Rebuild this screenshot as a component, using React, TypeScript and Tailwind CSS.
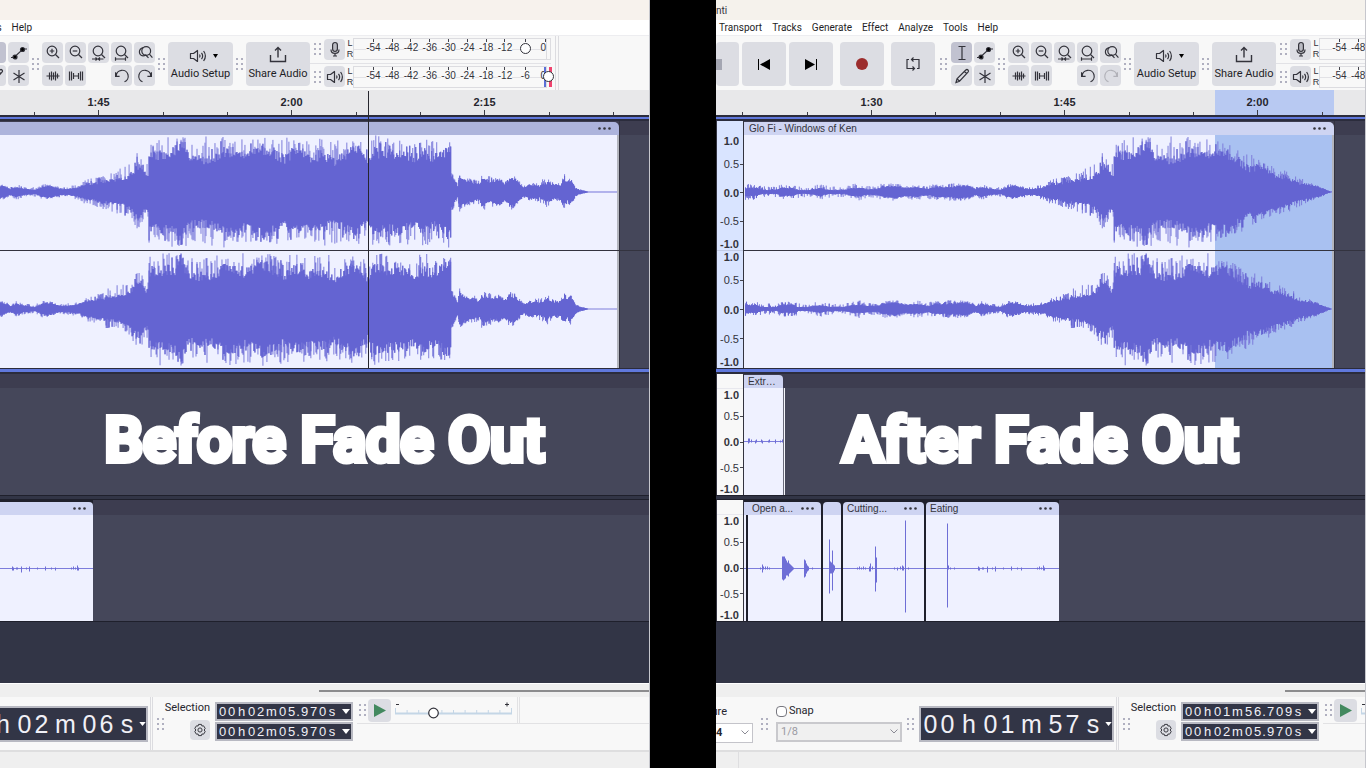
import React from 'react';

type Variant = 'before' | 'after';
type Key = [number, number, number];

/* Envelope of the music clip: [pixel offset, body level, peak level]. */
const ENVELOPE: Key[] = [
  [28, 4, 9], [40, 4, 8], [46, 2, 6], [60, 2, 5], [65, 4, 8], [76, 4, 7], [82, 2, 6], [92, 2, 5], [104, 4, 8], [112, 2, 6],
  [128, 2, 5], [136, 4, 8], [143, 4, 9], [150, 3, 6], [162, 3, 6], [166, 5, 9], [180, 6, 9], [190, 4, 6], [200, 5, 9],
  [212, 3, 7], [220, 5, 8], [235, 5, 9], [245, 6, 9], [252, 6, 8], [260, 3, 5], [266, 5, 8], [275, 3, 5], [285, 2, 5],
  [292, 5, 8], [298, 6, 8], [306, 4, 6], [312, 3, 5], [318, 3, 6], [325, 4, 8], [330, 5, 8],
  [333, 7, 12], [337, 8, 13], [344, 8, 14],
  [350, 10, 16], [360, 11, 22], [370, 13, 24], [377, 14, 27], [383, 20, 32], [387, 25, 42], [391, 25, 38],
  [395, 18, 30], [398, 18, 34], [399, 34, 54], [405, 35, 46], [410, 37, 56], [420, 38, 55], [425, 38, 56], [428, 48, 56],
  [432, 46, 56], [436, 38, 54], [440, 32, 50], [450, 32, 50], [457, 32, 57], [465, 34, 52], [475, 40, 57],
  [485, 40, 54], [495, 35, 56], [505, 38, 52], [512, 42, 57], [525, 38, 53], [535, 32, 55], [542, 38, 54],
  [550, 38, 54], [565, 32, 52], [570, 37, 55], [585, 30, 53], [595, 37, 50], [608, 42, 57], [618, 28, 46],
  [625, 40, 57], [635, 37, 54], [650, 38, 53], [665, 33, 52], [675, 37, 55], [685, 34, 50], [699, 42, 56],
  [701, 42, 55], [702, 17, 20], [706, 9, 12], [708, 6, 8], [710, 16, 22], [714, 12, 15], [725, 9, 13],
  [730, 8, 12], [732, 13, 19], [742, 10, 15], [750, 12, 14], [755, 8, 10], [761, 14, 19], [768, 10, 13],
  [774, 4, 6], [780, 7, 9], [790, 6, 11], [798, 9, 16], [805, 7, 9], [811, 7, 9], [815, 13, 18], [818, 9, 11],
  [821, 12, 16], [823, 9, 10], [826, 4, 5], [830, 2, 3], [836, 1, 1], [840, 0, 0], [872, 0, 0],
];

const FADE_START = 499;
const FADE_END = 618;

function makeRandom(seed: number) {
  let s = seed;
  return () => {
    s = (s * 1664525 + 1013904223) >>> 0;
    return s / 4294967296;
  };
}

function levelAt(x: number): [number, number] {
  for (let i = 1; i < ENVELOPE.length; i++) {
    const [x1, b1, p1] = ENVELOPE[i];
    if (x <= x1) {
      const [x0, b0, p0] = ENVELOPE[i - 1];
      const k = (x - x0) / (x1 - x0);
      return [b0 + (b1 - b0) * k, p0 + (p1 - p0) * k];
    }
  }
  return [0, 0];
}

function musicPaths(end: number, seed: number, fade: boolean) {
  const rnd = makeRandom(seed);
  let body = '';
  let peaks = '';
  for (let x = 29; x < end; x++) {
    const [b, p] = levelAt(x);
    const side = () => {
      const r = rnd();
      const n = r < 0.12 ? b + (p - b) * rnd() * 0.8 : b * (0.86 + rnd() * 0.3);
      const spike = rnd() < 0.38 ? n + (p - n) * (0.3 + rnd() * 0.7) : n;
      return [n, Math.max(n, spike)];
    };
    const up = side();
    const down = side();
    const g = fade && x > FADE_START ? Math.max(0, (FADE_END - x) / (FADE_END - FADE_START)) : 1;
    const px = x - 28 + 0.5;
    body += `M${px} ${(57 - Math.max(0.3, up[0] * g)).toFixed(1)}V${(57 + Math.max(0.3, down[0] * g)).toFixed(1)}`;
    peaks += `M${px} ${(57 - Math.max(0.3, up[1] * g)).toFixed(1)}V${(57 + Math.max(0.3, down[1] * g)).toFixed(1)}`;
  }
  return { body, peaks };
}

function MusicWave({ end, seed, fade }: { end: number; seed: number; fade: boolean }) {
  const w = end - 28;
  const { body, peaks } = musicPaths(end, seed, fade);
  return (
    <svg className="block h-full w-full" viewBox={`0 0 ${w} 115`} preserveAspectRatio="none" aria-hidden="true">
      <path d={peaks} stroke="#7c7cdb" strokeWidth="1" fill="none" />
      <path d={body} stroke="#6464d2" strokeWidth="1.1" fill="none" />
    </svg>
  );
}

/* Bars of a short effect clip: [x, up, down]. */
function EffectWave({ bars }: { bars: Key[] }) {
  return (
    <svg className="block h-full w-full overflow-hidden" aria-hidden="true">
      <path d="M0 53.5H400" stroke="#7d7ddc" strokeWidth="1" />
      <path d={bars.map(([x, u, d]) => `M${x + 0.5} ${53.5 - u}V${53.5 + d}`).join('')} stroke="#6e6ed6" strokeWidth="1" />
    </svg>
  );
}

const EXTRA: Key[] = [[4, 3, 2], [5, 3, 1], [7, 2, 1], [11, 1, 2], [12, 2, 1], [17, 2, 1], [18, 1, 2], [24, 1, 1], [25, 2, 1], [31, 2, 2], [36, 1, 1], [38, 2, 1]];
const OPENING: Key[] = [
  [12, 1, 1], [14, 4, 4], [15, 2, 1], [17, 2, 1], [19, 2, 1], [21, 1, 1],
  [34, 12, 11], [35, 12, 12], [36, 12, 11], [37, 10, 10], [38, 8, 7], [39, 6, 7], [40, 8, 8], [41, 5, 5], [42, 4, 4], [43, 3, 3], [44, 2, 2], [45, 1, 1],
  [56, 9, 9], [57, 8, 8], [58, 5, 5], [59, 3, 3], [60, 2, 2], [64, 1, 1],
];
const SHORT: Key[] = [[6, 29, 25], [7, 7, 5], [8, 6, 5], [9, 18, 22], [10, 4, 4], [11, 3, 2]];
const CUTTING: Key[] = [[14, 1, 1], [16, 2, 1], [18, 1, 1], [20, 2, 1], [22, 1, 1], [26, 2, 3], [27, 5, 3], [29, 2, 1], [32, 22, 23], [33, 11, 14], [51, 1, 1], [54, 1, 2], [57, 2, 1], [59, 3, 2], [60, 2, 2], [62, 48, 44], [65, 1, 1]];
const EATING: Key[] = [[21, 45, 39], [22, 3, 1], [24, 1, 1], [28, 1, 1], [52, 2, 2], [53, 1, 2], [56, 1, 1], [57, 1, 1], [61, 2, 4], [66, 1, 1], [69, 2, 3], [77, 1, 1], [85, 2, 2], [91, 1, 1], [95, 1, 2], [111, 1, 1], [113, 2, 1], [115, 1, 1], [117, 3, 2], [118, 1, 2]];

function Icon({ children, className = 'size-5' }: { children: React.ReactNode; className?: string }) {
  return (
    <svg viewBox="0 0 20 20" className={className} fill="none" stroke="#33333b" strokeWidth="1.2" aria-hidden="true">
      {children}
    </svg>
  );
}

const Speaker = () => (
  <Icon>
    <path d="M2.5 7.5H5.5L9.5 4.5V15.5L5.5 12.5H2.5Z" strokeLinejoin="round" />
    <path d="M11.5 8.5Q12.6 10 11.5 11.5M13.5 6.8Q15.8 10 13.5 13.2M15.6 5Q19.2 10 15.6 15" />
  </Icon>
);
const Mic = () => (
  <Icon>
    <rect x="7.6" y="3.5" width="4.8" height="9" rx="2.4" fill="#b9bac2" />
    <path d="M6 10.5Q6 14.4 10 14.4Q14 14.4 14 10.5M10 14.4V17M8 17H12" />
  </Icon>
);
const Lens = ({ kind }: { kind: string }) => (
  <Icon>
    {kind === 'toggle' ? (
      <>
        <circle cx="11.2" cy="8" r="4.4" />
        <path d="M14.4 11.2L17.4 14.6M8.2 4.6Q4.4 5.6 4.4 9Q4.600 12.400 8 12.800Q9.600 12.800 10.800 12L13.500 14.800" />
      </>
    ) : (
      <>
        <circle cx="9" cy="8" r="4.8" />
        <path d="M12.500 11.500L16 15" />
      </>
    )}
    {kind === 'in' && <path d="M9 5.700V10.300M6.700 8H11.300" />}
    {kind === 'out' && <path d="M6.700 8H11.300" />}
    {kind === 'sel' && <path d="M3 16H8M9.500 16H14.500M6.500 14.500L8.200 16L6.500 17.500M11 14.500L9.300 16L11 17.500" />}
    {kind === 'fit' && <path d="M3.500 16H13.500M3.500 14.300V17.700M13.500 14.300V17.700" />}
  </Icon>
);
const Undo = () => (
  <Icon>
    <path d="M4.200 10.200A6 6 0 1 1 12.500 15.800M3.600 6.300V10.400H7.600" />
  </Icon>
);
const Redo = () => (
  <Icon>
    <path d="M15.800 10.200A6 6 0 1 0 7.500 15.800M16.400 6.300V10.400H12.400" />
  </Icon>
);

function ToolButton({ label, children, active, dim }: { label: string; children: React.ReactNode; active?: boolean; dim?: boolean }) {
  return (
    <button
      aria-label={label}
      className={`flex h-[21px] w-[21px] shrink-0 items-center justify-center rounded-sm ${active ? 'bg-[#c1c2d0]' : 'bg-[#dcdde3]'}`}
    >
      <span className={dim ? 'opacity-25' : ''}>{children}</span>
    </button>
  );
}

function BigButton({ label, className = 'w-11', children }: { label: string; className?: string; children: React.ReactNode }) {
  return (
    <button aria-label={label} className={`flex h-11 shrink-0 items-center justify-center rounded-sm bg-[#dcdde3] ${className}`}>
      {children}
    </button>
  );
}

function Grip({ className = 'w-[13px]' }: { className?: string }) {
  return (
    <span className={`flex shrink-0 items-center justify-center ${className}`}>
      <svg width="7" height="12" viewBox="0 0 7 12" fill="#b0b0c0" aria-hidden="true">
        <path d="M0 0h2v2H0zM5 0h2v2H5zM0 5h2v2H0zM5 5h2v2H5zM0 10h2v2H0zM5 10h2v2H5z" />
      </svg>
    </span>
  );
}

const LEVELS = ['-54', '-48', '-42', '-36', '-30', '-24', '-18', '-12'];

function MeterRow({ playback }: { playback?: boolean }) {
  return (
    <div className="flex min-h-0 flex-1 items-center">
      <Grip className="w-[14px]" />
      <ToolButton label={playback ? 'Playback meter' : 'Recording meter'}>{playback ? <Speaker /> : <Mic />}</ToolButton>
      <div className="flex w-2 flex-col items-center pl-[2px] text-[9px] leading-[11px] text-[#33333b]">
        <span>L</span>
        <span>R</span>
      </div>
      <div className="relative flex h-[22px] w-[194px] items-center border border-[#dcdce0] bg-[#f8f8f8] pl-[10px] text-[10px] leading-3 text-[#33333b]">
        <span className="absolute inset-x-0 top-[10px] h-px bg-[#e2e2e6]" />
        {LEVELS.map((l) => (
          <span key={l} className="relative flex h-full w-[19px] flex-col items-center">
            <span className="h-[3px] w-px shrink-0 bg-[#44444c]" />
            <span className="bg-[#f8f8f8]">{l}</span>
          </span>
        ))}
        <span className="relative flex h-full w-[22px] flex-col items-center">
          <span className="h-[3px] w-px shrink-0 bg-[#44444c]" />
          {playback ? <span className="bg-[#f8f8f8]">-6</span> : <span className="mt-[1px] size-[11px] rounded-full border border-[#33333b] bg-white" />}
        </span>
        <span className="relative flex h-full w-[10px] flex-col items-end">
          <span className="h-[3px] w-px shrink-0 bg-[#44444c]" />
          <span>0</span>
        </span>
        {playback && (
          <span className="absolute inset-y-0 right-[-6px] flex w-[8px] items-center justify-center">
            <span className="absolute inset-y-0 left-0 w-[2px] bg-[#5b6fd6]" />
            <span className="absolute inset-y-0 right-0 w-[3px] bg-[#f0426e]" />
            <span className="relative size-[11px] shrink-0 rounded-full border border-[#33333b] bg-white" />
          </span>
        )}
      </div>
      {!playback && <span className="h-[22px] w-1 border-y border-r border-[#dcdce0]" />}
    </div>
  );
}

function Toolbar({ variant }: { variant: Variant }) {
  return (
    <div className="flex h-[55px] shrink-0 border-t border-[#ededf0] bg-[#f8f8f8]">
      <div className="flex items-center pt-[2px]">
        <BigButton label="Stop" className="w-[23px]">
          <span className="mr-auto h-[11px] w-[6px] bg-[#a4a6b2]" />
        </BigButton>
        <div className="ml-[3px] flex gap-[3px]">
          <BigButton label="Skip to start">
            <svg width="12" height="11" aria-hidden="true"><path d="M0 0h1v11H0zM12 0v11L2 5.500z" /></svg>
          </BigButton>
          <BigButton label="Skip to end">
            <svg width="12" height="11" aria-hidden="true"><path d="M11 0h1v11h-1zM0 0v11l10-5.500z" /></svg>
          </BigButton>
        </div>
        <div className="ml-[7px] flex gap-[7px]">
          <BigButton label="Record">
            <span className="size-3 rounded-full bg-[#9c2d2d]" />
          </BigButton>
          <BigButton label="Loop">
            <Icon>
              <path d="M6 5.500H4V14.500H11.500M14 14.500H16V5.500H8.500M10.500 3.500L8.500 5.500L10.500 7.500M9.500 12.500L11.500 14.500L9.500 16.500" />
            </Icon>
          </BigButton>
        </div>
        <Grip className="w-4" />
        <div className="grid grid-cols-[21px_21px] gap-[2px]">
          <ToolButton label="Selection tool" active>
            <Icon><path d="M6.500 3.500H13.500M10 3.500V16.500M6.500 16.500H13.500" /></Icon>
          </ToolButton>
          <ToolButton label="Envelope tool">
            <Icon><path d="M2 14.500H5L14 6H18" /><circle cx="6" cy="14" r="2" fill="#000" /><circle cx="13.500" cy="6.500" r="2" fill="#000" /></Icon>
          </ToolButton>
          <ToolButton label="Draw tool">
            <Icon><path d="M4 16.500L5 12.800L13.800 4Q15 3 16 4Q17 5 16 6.200L7.500 15.200ZM12.500 5.500L14.800 7.700M5 12.800L7.500 15.200" /></Icon>
          </ToolButton>
          <ToolButton label="Multi-tool">
            <Icon><path d="M10 4V17M4.500 7L15.500 14M15.500 7L4.500 14" /></Icon>
          </ToolButton>
        </div>
        <Grip />
        <div className="grid grid-cols-[repeat(5,21px)] gap-[2px]">
          <ToolButton label="Zoom in"><Lens kind="in" /></ToolButton>
          <ToolButton label="Zoom out"><Lens kind="out" /></ToolButton>
          <ToolButton label="Fit selection to width"><Lens kind="sel" /></ToolButton>
          <ToolButton label="Fit project to width"><Lens kind="fit" /></ToolButton>
          <ToolButton label="Zoom toggle"><Lens kind="toggle" /></ToolButton>
          <ToolButton label="Trim audio outside selection">
            <Icon><path d="M3.500 10H16.500M6.500 6.500V13.500M8.500 5.500V14.500M10.500 6.500V13.500M12.500 5.500V14.500M14.500 7.500V12.500" /></Icon>
          </ToolButton>
          <ToolButton label="Silence audio selection">
            <Icon><path d="M3.500 5.500V14.500M5.500 5.500V14.500M7.500 7V13M7.500 10H12.500M12.500 7V13M14.500 5.500V14.500M16.500 5.500V14.500" /></Icon>
          </ToolButton>
          <span />
          <ToolButton label="Undo"><Undo /></ToolButton>
          <ToolButton label="Redo" dim={variant === 'after'}><Redo /></ToolButton>
        </div>
        <Grip />
        <button className="flex h-11 w-[65px] flex-col items-center rounded-sm bg-[#dcdde3] pt-1 font-['Roboto',sans-serif] text-[11px] leading-4 text-[#1e1e26]">
          <span className="flex items-center gap-[5px] pl-[5px]">
            <Speaker />
            <svg width="5" height="4" aria-hidden="true"><path d="M0 0h5L2.500 4z" /></svg>
          </span>
          Audio Setup
        </button>
        <Grip />
        <button className="flex h-11 w-16 flex-col items-center rounded-sm bg-[#dcdde3] pt-1 font-['Roboto',sans-serif] text-[11px] leading-4 text-[#1e1e26]">
          <Icon><path d="M2.500 9V15.500H17.500V9M10 11.500V2M7 4.500L10 1.500L13 4.500" strokeWidth="1.400" /></Icon>
          Share Audio
        </button>
      </div>
      <div className="flex flex-col border-r border-[#dcdce0] pr-1">
        <MeterRow />
        <div className="h-px bg-[#e2e2e6]" />
        <MeterRow playback />
      </div>
      <div className="ml-[2px] w-px bg-[#dcdce0]" />
    </div>
  );
}

const TICKS = [-38, 26, 91, 155, 219, 284, 348, 413, 477, 541, 606, 670, 734, 799, 863];

function Ruler({ variant }: { variant: Variant }) {
  return (
    <div className="relative h-[25px] shrink-0 bg-[#e8e8ea]">
      {variant === 'after' && <div className="absolute inset-y-0 left-[499px] w-[119px] bg-[#b8c9f2]" />}
      <div className="relative flex pl-[59px] pt-1 text-[11px] font-bold leading-4 text-[#26262e]">
        {['1:30', '1:45', '2:00', '2:15'].map((t, i) => (
          <span key={t} className={`w-[193px] shrink-0 text-center ${i === 0 ? 'group-data-[pane=before]:invisible' : ''}`}>{t}</span>
        ))}
      </div>
      <svg className="absolute inset-x-0 bottom-0 h-[5px] w-full" aria-hidden="true">
        <path d={TICKS.map((x, i) => `M${x + 0.5} ${i % 3 === 0 ? 0 : 2}V5`).join('')} stroke="#3c3c44" />
      </svg>
    </div>
  );
}

function ScaleMarks({ className = 'flex-1' }: { className?: string }) {
  const spacers = ['flex-[2]', 'flex-[3]', 'flex-[3]', 'flex-[2]'];
  return (
    <div className={`flex min-h-0 flex-col items-end text-[11px] leading-3 text-[#33333b] group-data-[pane=before]:invisible ${className}`}>
      {['1.0', '0.5', '0.0', '-0.5', '-1.0'].map((v, i) => (
        <React.Fragment key={v}>
          <span className={`flex items-center gap-px ${i % 2 === 0 ? 'font-bold' : ''}`}>
            {v}
            <span className={`h-px w-[3px] ${i === 0 || i === 4 ? '' : 'bg-[#44444c]'}`} />
          </span>
          {i < 4 && <span className={spacers[i]} />}
        </React.Fragment>
      ))}
    </div>
  );
}

function Dots() {
  return (
    <button aria-label="Clip menu" className="shrink-0">
      <svg width="13" height="3" fill="#33333b" className="block" aria-hidden="true">
        <circle cx="1.500" cy="1.500" r="1.300" /><circle cx="6.500" cy="1.500" r="1.300" /><circle cx="11.500" cy="1.500" r="1.300" />
      </svg>
    </button>
  );
}

function Clip({ name, width, menu, bars, round = 'rounded-t-[4px]' }: { name: string; width: string; menu?: boolean; bars: Key[]; round?: string }) {
  return (
    <div className={`flex shrink-0 flex-col ${width}`}>
      <div className={`flex h-[13px] items-center justify-between overflow-hidden bg-[#ced4f2] pl-1 pr-[7px] text-[10px] leading-3 text-[#33333b] ${round}`}>
        <span className="whitespace-nowrap group-data-[pane=before]:invisible">{name}</span>
        {menu && <Dots />}
      </div>
      <div className="min-h-0 flex-1 bg-[#eff1ff]">
        <EffectWave bars={bars} />
      </div>
    </div>
  );
}

function MusicTrack({ variant }: { variant: Variant }) {
  const after = variant === 'after';
  const end = after ? 618 : 868;
  return (
    <div className="relative flex h-[247px] shrink-0 bg-[#45475a]">
      <div className="flex w-[28px] shrink-0 flex-col border-x border-[#33333f] bg-[#d9e4ff]">
        <div className="h-[14px]" />
        <ScaleMarks className="h-[115px]" />
        <div className="h-px bg-[#c3cce6]" />
        <ScaleMarks />
      </div>
      <div className="absolute left-7 right-0 top-0 h-[14px] bg-[#3d3d50]" />
      <div className={`relative flex shrink-0 flex-col border-r border-[#33333f] pt-px ${after ? 'w-[591px]' : 'w-[842px]'}`}>
        <div className={`flex h-[13px] items-center justify-between rounded-tr-[5px] pl-[5px] pr-2 text-[10px] leading-3 text-[#33333b] ${after ? 'bg-[#ced4f2]' : 'bg-[#adb4dc]'}`}>
          <span className="group-data-[pane=before]:invisible">Glo Fi - Windows of Ken</span>
          <Dots />
        </div>
        <div className="relative flex min-h-0 flex-1 flex-col border-r-2 border-[#b3b5bd] bg-[#eff1ff]">
          {after && <div className="absolute inset-y-0 right-0 w-[117px] bg-[#a9c1f1]" />}
          <div className="relative h-[115px]"><MusicWave end={end} seed={17} fade={after} /></div>
          <div className="h-px" />
          <div className="relative min-h-0 flex-1"><MusicWave end={end} seed={91} fade={after} /></div>
        </div>
      </div>
      <div className="absolute left-7 right-0 top-[129px] h-px bg-[#33333f]" />
      {!after && <div className="absolute -top-[30px] bottom-0 left-[618px] w-px bg-[#26262e]" />}
    </div>
  );
}

function ScaleColumn() {
  return (
    <div className="flex w-[28px] shrink-0 flex-col border-x border-[#33333f] bg-[#f8f8f8]">
      <div className="h-[15px] border-b border-[#e8e8ee]" />
      <ScaleMarks />
    </div>
  );
}

function Tracks({ variant }: { variant: Variant }) {
  return (
    <div className="flex flex-1 flex-col bg-[#323546]">
      <div className="h-[6px] border-y-2 border-[#2b2c3c] bg-[#6078dc]" />
      <MusicTrack variant={variant} />
      <div className="h-[6px] border-b-2 border-t border-[#2b2c3c] bg-[#6078dc]" />
      <div className="relative flex h-[121px] shrink-0 bg-[#45475a]">
        <ScaleColumn />
        <div className="absolute left-7 right-0 top-0 h-[14px] bg-[#3d3d50]" />
        <div className="relative flex pt-px">
          <Clip name="Extr…" width="w-[39px]" bars={EXTRA} round="rounded-tr-[4px]" />
          <div className="mt-[13px] w-px bg-[#6b6c7c]" />
          <div className="mt-[13px] w-px bg-[#f4f5fb]" />
        </div>
      </div>
      <div className="h-[5px] shrink-0 border-y border-[#1f202c]" />
      <div className="relative flex h-[122px] shrink-0 border-b border-[#1f202c] bg-[#45475a]">
        <ScaleColumn />
        <div className="absolute left-7 right-0 top-0 h-[15px] bg-[#3d3d50]" />
        <div className="relative flex gap-[2px] bg-[#1f202c] pt-[2px]">
          <Clip name="" width="w-[2px]" bars={[]} round="" />
          <Clip name="Open a..." width="w-[73px]" menu bars={OPENING} />
          <Clip name="" width="w-[18px]" bars={SHORT} />
          <Clip name="Cutting..." width="w-[81px]" menu bars={CUTTING} />
          <Clip name="Eating" width="w-[133px]" menu bars={EATING} />
        </div>
      </div>
    </div>
  );
}

function cellWidth(c: string, big: boolean) {
  if (c === 'h') return big ? 'w-[26px]' : 'w-[11px]';
  if (c === 'm') return big ? 'w-[31px]' : 'w-[13px]';
  if (c === '.') return 'w-[4px]';
  if (c === 's') return big ? 'w-[24px]' : 'w-[10px]';
  return big ? 'w-[17px]' : 'w-[9px]';
}

function TimeField({ value, big = false }: { value: string; big?: boolean }) {
  return (
    <div
      className={`flex items-center overflow-hidden border-2 border-[#b8b9c2] bg-[#323546] text-[#f0f0f6] ${
        big ? 'h-9 w-[195px] pl-[1px] text-[25px] leading-8' : 'h-[19px] w-[138px] pl-[1px] text-[13px] leading-4'
      }`}
    >
      {value.split('').map((c, i) => (
        <span key={i} className={`shrink-0 text-center ${cellWidth(c, big)} ${big && i < 2 ? 'group-data-[pane=before]:invisible' : ''}`}>{c}</span>
      ))}
      <button aria-label="Time format" className="ml-auto shrink-0 pr-[1px]">
        <svg width={big ? 7 : 8} height={big ? 4 : 5} viewBox="0 0 8 5" fill="#fff" className="block" aria-hidden="true"><path d="M0 0h8L4 5z" /></svg>
      </button>
    </div>
  );
}

function Chevron() {
  return (
    <svg width="8" height="5" fill="none" stroke="#8a8a94" className="pointer-events-none absolute right-1 top-[7px]" aria-hidden="true"><path d="M0.500 0.500L4 4L7.500 0.500" /></svg>
  );
}

function BottomBar({ variant }: { variant: Variant }) {
  const after = variant === 'after';
  return (
    <>
      <div className="flex h-[14px] shrink-0 items-center border-t border-white bg-[#efefef]">
        <div className="ml-[569px] h-[2px] flex-1 bg-[#8c8c8e]" />
      </div>
      <div className="flex h-[55px] shrink-0 border-b-2 border-[#dededf] bg-[#f8f8f8] font-['Roboto',sans-serif] text-[11px] leading-4 text-[#26262e]">
        <div className="flex items-center">
          <div className="flex h-full w-[37px] flex-col overflow-hidden pt-[7px] group-data-[pane=before]:invisible">
            <label htmlFor={`sig-${variant}`} className="flex h-4 w-[11px] justify-end">Signature</label>
            <div className="relative mt-[3px] h-5 w-[37px]">
              <select id={`sig-${variant}`} className="h-5 w-full appearance-none border border-l-0 border-[#c4c4ca] bg-white font-bold"><option>4</option></select>
              <Chevron />
            </div>
          </div>
          <Grip className="w-[23px]" />
          <div className="flex h-full w-[126px] flex-col pt-[6px] group-data-[pane=before]:invisible">
            <label className="flex h-4 items-center gap-[2px]">
              <input type="checkbox" className="size-[11px] appearance-none rounded-sm border border-[#77777f] bg-white" />
              Snap
            </label>
            <div className="relative mt-[3px]">
              <select aria-label="Snap to" disabled className="h-5 w-full appearance-none border-2 border-[#c9c9cd] bg-[#f0f0f0] pl-[3px] text-[11px] text-[#9a9aa2]"><option>1/8</option></select>
              <Chevron />
            </div>
          </div>
          <Grip className="w-[17px]" />
          <div className="font-['Liberation_Sans',sans-serif]">
            <TimeField big value={after ? '00h01m57s' : '00h02m06s'} />
          </div>
          <div className="ml-[2px] h-full w-[3px] border-x border-[#dcdce0]" />
          <Grip className="w-[14px]" />
        </div>
        <div className="flex w-[46px] flex-col items-end gap-[4px] pr-[3px] pt-[3px]">
          <span>Selection</span>
          <button aria-label="Selection settings" className="flex h-5 w-5 items-center justify-center rounded-sm bg-[#dcdde3]">
            <Icon className="size-4">
              <path d="M8.200 3H11.800L12.400 5L14.500 4.800L16.500 8L15.200 10L16.500 12L14.500 15.200L12.400 15L11.800 17H8.200L7.600 15L5.500 15.200L3.500 12L4.800 10L3.500 8L5.500 4.800L7.600 5Z" />
              <circle cx="10" cy="10" r="2.600" />
            </Icon>
          </button>
        </div>
        <div className="ml-[2px] flex flex-col gap-px pt-[5px] font-['Liberation_Sans',sans-serif]">
          <TimeField value={after ? '00h01m56.709s' : '00h02m05.970s'} />
          <TimeField value="00h02m05.970s" />
        </div>
        <div className="ml-1 flex flex-1 flex-col">
          <div className="flex h-[27px] items-center border-b border-[#e2e2e4]">
            <Grip className="w-[11px]" />
            <button aria-label="Play at speed" className="flex h-[23px] w-[23px] items-center justify-center rounded-sm bg-[#dcdde3]">
              <svg width="12" height="13" fill="#43895f" aria-hidden="true"><path d="M0 0L12 6.500L0 13z" /></svg>
            </button>
            <div className="relative ml-1 h-[23px] w-[117px]">
              <input type="range" aria-label="Playback speed" min="0" max="100" defaultValue="33" className="absolute inset-0 w-full opacity-0" />
              <svg className="pointer-events-none block" width="117" height="23" fill="none" aria-hidden="true">
                <path d="M1 5.500H4M110 5.500H114M112 3.500V7.500" stroke="#33333b" />
                <path d="M0 14.500H117" stroke="#c4d6e6" strokeWidth="2" />
                {Array.from({ length: 11 }, (_, i) => <path key={i} d={`M${i * 11.6 + 0.5} ${i % 10 ? 11 : 9}V14`} stroke="#c4d6e6" />)}
                <circle cx="38.500" cy="14" r="4.800" fill="#fff" stroke="#33333b" strokeWidth="1.200" />
              </svg>
            </div>
            <div className="ml-[5px] h-full w-[3px] border-x border-[#e2e2e4]" />
          </div>
        </div>
      </div>
      <div className="flex h-[16px] shrink-0 bg-[#efefef]">
        <div className="w-[23px] border-r border-[#dedee0]" />
      </div>
    </>
  );
}

const MENUS = ['Transport', 'Tracks', 'Generate', 'Effect', 'Analyze', 'Tools', 'Help'];

function EditorPane({ variant, caption }: { variant: Variant; caption: string }) {
  const after = variant === 'after';
  return (
    <section data-pane={variant} className="group relative flex min-w-0 flex-1 overflow-hidden border-r border-[#c6c7cd]">
      <div className={`flex shrink-0 flex-col overflow-hidden font-['Liberation_Sans',sans-serif] ${after ? 'w-full' : '-ml-[250px] w-[calc(100%+250px)]'}`}>
        <header className={`flex h-5 shrink-0 items-center font-['Roboto',sans-serif] text-[10px] text-[#33333b] ${after ? 'bg-[#f5f2ec]' : 'bg-[#f7f2ed]'}`}>
          <span className="group-data-[pane=before]:invisible">nti</span>
        </header>
        <nav className="flex h-[15px] shrink-0 items-center gap-[10px] bg-white pl-[3px] font-['Roboto',sans-serif] text-[10px] leading-4 text-[#1e1e26]">
          {MENUS.map((m, i) => (
            <button key={m} className={i < 5 ? 'group-data-[pane=before]:invisible' : ''}>{m}</button>
          ))}
        </nav>
        <Toolbar variant={variant} />
        <Ruler variant={variant} />
        <Tracks variant={variant} />
        <BottomBar variant={variant} />
      </div>
      <h2 className="absolute inset-x-0 top-[404px] text-center font-['Roboto',sans-serif] text-[61px] font-medium leading-[72px] text-white [-webkit-text-stroke:6px_white]">
        {caption}
      </h2>
    </section>
  );
}

export default function App() {
  return (
    <main className="flex min-h-screen bg-black">
      <EditorPane variant="before" caption="Before Fade Out" />
      <div className="w-[66px] shrink-0 bg-black" />
      <EditorPane variant="after" caption="After Fade Out" />
    </main>
  );
}
